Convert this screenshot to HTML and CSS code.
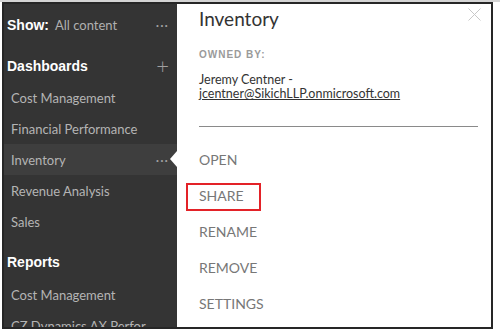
FILE: index.html
```html
<!DOCTYPE html>
<html lang="en">
<head>
    <meta charset="UTF-8">
    <title>Inventory - Dashboard menu</title>
    <link rel="stylesheet" href="styles.css">
</head>
<body>
    <div class="frame">
        <div class="sidebar">
            <div class="show-row">
                <span class="show-label">Show:</span>
                <span class="show-value">All content</span>
                <span class="dots">&middot;&middot;&middot;</span>
            </div>

            <div class="section-head">
                <span>Dashboards</span>
                <span class="plus">+</span>
            </div>
            <div class="nav-item">Cost Management</div>
            <div class="nav-item">Financial Performance</div>
            <div class="nav-item active">
                Inventory
                <span class="dots">&middot;&middot;&middot;</span>
                <span class="notch"></span>
            </div>
            <div class="nav-item">Revenue Analysis</div>
            <div class="nav-item">Sales</div>

            <div class="section-head reports">
                <span>Reports</span>
            </div>
            <div class="nav-item">Cost Management</div>
            <div class="nav-item">CZ Dynamics AX Perfor</div>
        </div>

        <div class="panel">
            <svg class="close" width="13" height="13" viewBox="0 0 13 13">
                <path d="M0.5 0.5L12.5 12.5M12.5 0.5L0.5 12.5" stroke="#c8c8c8" stroke-width="1" fill="none"/>
            </svg>
            <h1>Inventory</h1>
            <div class="owned-label">OWNED BY:</div>
            <div class="owner">
                Jeremy Centner -<br>
                <a href="#">jcentner@SikichLLP.onmicrosoft.com</a>
            </div>
            <hr>
            <ul class="actions">
                <li>OPEN</li>
                <li class="highlight">SHARE</li>
                <li>RENAME</li>
                <li>REMOVE</li>
                <li>SETTINGS</li>
            </ul>
        </div>
    </div>
</body>
</html>
```

FILE: styles.css
```css
html {
    background: #fff;
}
body {
    margin: 0;
    border-top: 2px solid #d4d4d4;
    font-family: 'Segoe UI', Lato, 'Liberation Sans', sans-serif;
}
.frame {
    display: flex;
    height: 323px;
    margin: 0 7px 4px 2px;
    border: 2px solid #262626;
    overflow: hidden;
}
.sidebar {
    width: 173px;
    flex-shrink: 0;
    background-color: #343434;
    color: #b4b4b4;
}
.show-row {
    display: flex;
    align-items: center;
    height: 41px;
    padding: 0 8px 0 3px;
}
.show-label {
    font-family: 'Liberation Sans', sans-serif;
    font-weight: bold;
    font-size: 14px;
    color: #fff;
    margin-right: 6px;
}
.show-value {
    font-size: 13px;
    color: #b0b0b0;
    flex: 1;
}
.dots {
    color: #a0a0a0;
    font-size: 13px;
    letter-spacing: 1px;
}
.section-head {
    display: flex;
    justify-content: space-between;
    align-items: center;
    height: 33px;
    padding: 4px 8px 0 3px;
    font-family: 'Liberation Sans', sans-serif;
    font-weight: bold;
    font-size: 14px;
    color: #fff;
}
.section-head.reports {
    height: 34px;
    padding-top: 8px;
}
.plus {
    font-family: Lato, sans-serif;
    font-weight: 300;
    font-size: 22px;
    color: #a0a0a0;
}
.nav-item {
    position: relative;
    display: flex;
    justify-content: space-between;
    align-items: center;
    height: 31px;
    padding: 0 8px 0 7px;
    font-size: 13px;
    color: #b4b4b4;
    white-space: nowrap;
}
.nav-item.active {
    background-color: #3e3e3e;
}
.notch {
    position: absolute;
    right: 0;
    top: 7px;
    border-top: 8px solid transparent;
    border-bottom: 8px solid transparent;
    border-right: 7px solid #fff;
}
.panel {
    position: relative;
    flex: 1;
    background: #fff;
    padding: 3px 13px 0 22px;
    color: #333;
}
.close {
    position: absolute;
    top: 4px;
    right: 10px;
}
h1 {
    margin: 0;
    font-weight: normal;
    font-size: 19px;
    line-height: 24px;
    color: #333;
}
.owned-label {
    margin-top: 17px;
    font-family: 'Liberation Sans', sans-serif;
    font-weight: bold;
    font-size: 10px;
    line-height: 14px;
    letter-spacing: 1px;
    color: #9a9a9a;
}
.owner {
    margin-top: 11px;
    font-size: 12.5px;
    line-height: 14px;
    color: #333;
}
.owner a {
    color: #333;
}
hr {
    margin: 25px 0 0;
    border: none;
    border-top: 1px solid #8a8a8a;
}
.actions {
    list-style: none;
    margin: 15px 0 0;
    padding: 0;
}
.actions li {
    position: relative;
    height: 36px;
    line-height: 36px;
    font-size: 14px;
    color: #777;
}
.actions li.highlight::before {
    content: '';
    position: absolute;
    left: -13px;
    top: 5px;
    width: 71px;
    height: 24px;
    border: 2.5px solid #e32228;
}
```
